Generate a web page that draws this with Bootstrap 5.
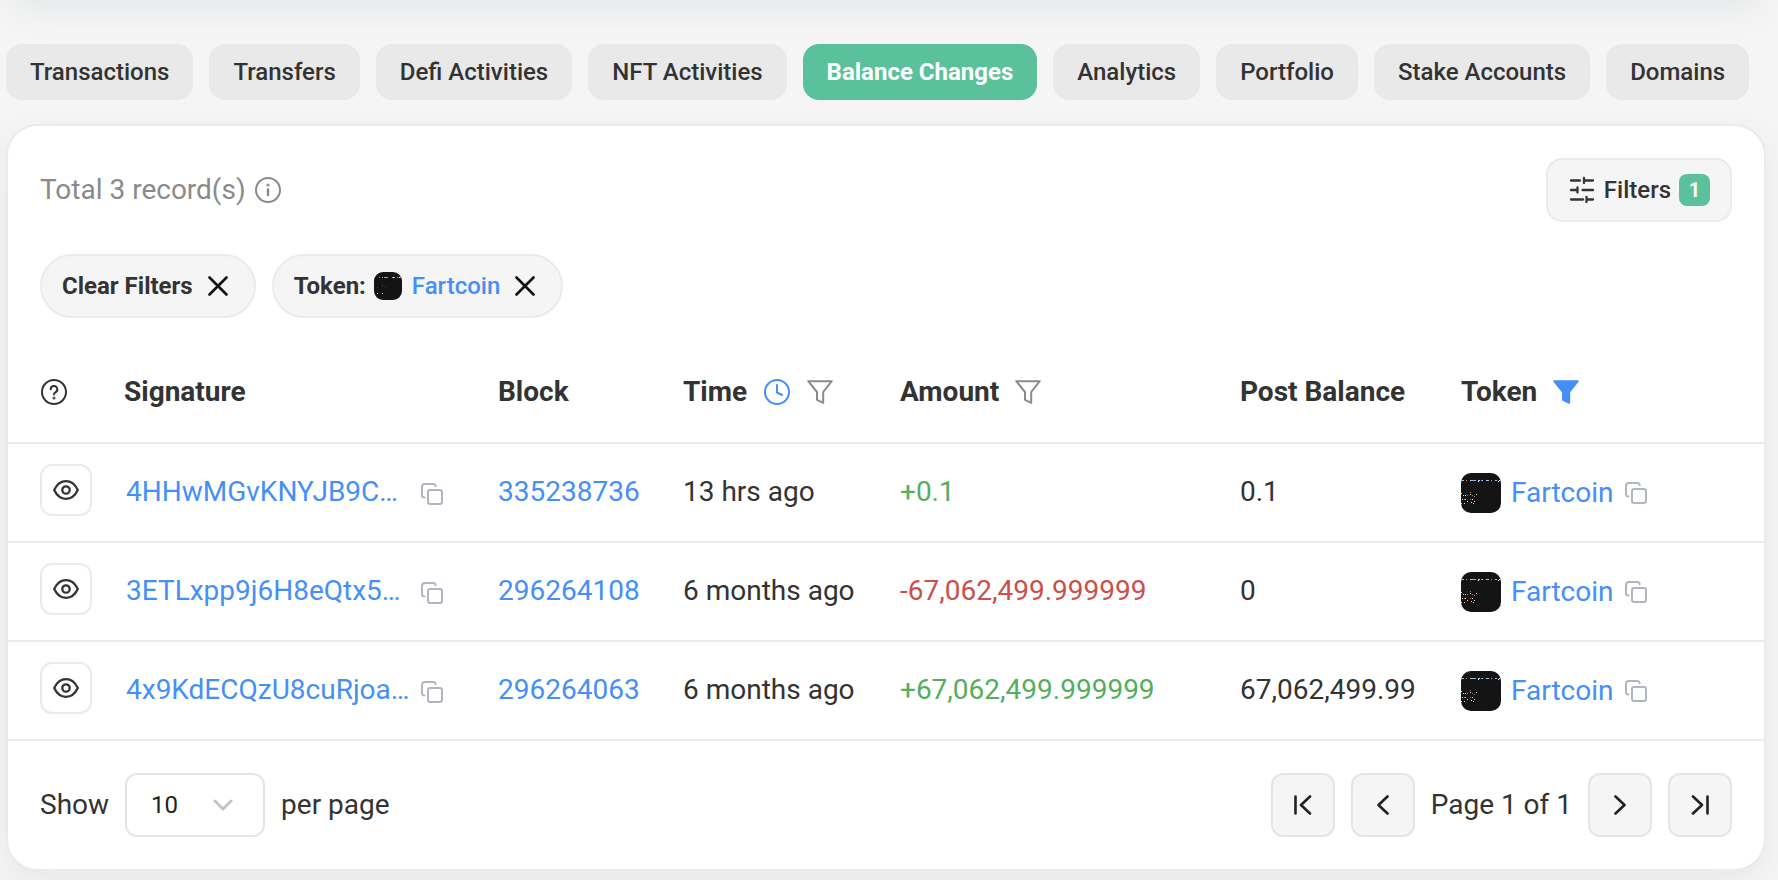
<!DOCTYPE html>
<html lang="en">
<head>
<meta charset="utf-8">
<meta name="viewport" content="width=device-width, initial-scale=1">
<title>Balance Changes</title>
<link rel="stylesheet" href="https://cdn.jsdelivr.net/npm/bootstrap@5.3.0/dist/css/bootstrap.min.css">
<style>
  :root { --line: #eaeaef; --ink: #333; --link: #458ff7; --brand: #5ac19c; --soft: #f5f5f5; }
  body { font-family: Roboto, "Liberation Sans", sans-serif; font-size: 28px; line-height: 40px; color: var(--ink); background: #f5f5f5; overflow-x: hidden; }
  a { color: var(--link); text-decoration: none; }
  svg { display: block; flex: none; }
  .ic { fill: none; stroke: currentColor; stroke-width: 2; stroke-linecap: round; stroke-linejoin: round; }
  .page-wrap { padding: 0 12px 9px 6px; }
  .panel { background: #fff; border: 2px solid var(--line); border-radius: 32px; box-shadow: 0 12px 32px rgba(140,152,164,.13); }
  .panel-above { height: 60px; margin-top: -60px; }
  .tab-row { padding-top: 44px; margin-bottom: 24px; }
  .tab-btn { border: 0; border-radius: 16px; background: #e9e9e9; color: var(--ink); font-size: 24px; font-weight: 500; line-height: 32px; padding: 12px 24px; white-space: nowrap; }
  .tab-btn.active { background: var(--brand); color: #fff; font-weight: 700; }
  .panel-top { padding: 32px 32px 0; }
  .btn-filters { height: 64px; border: 2px solid var(--line); border-radius: 16px; background: var(--soft); color: var(--ink); font-size: 24px; font-weight: 500; padding: 0 20px; }
  .count { background: var(--brand); color: #fff; border-radius: 8px; width: 31px; height: 32px; font-size: 20px; line-height: 32px; font-weight: 700; }
  .chip { height: 64px; border: 2px solid var(--line); border-radius: 32px; background: var(--soft); color: var(--ink); font-size: 24px; font-weight: 700; padding: 0 26px 0 20px; }
  .chip a { font-weight: 500; }
  .chip-x { margin-left: 15px; }
  .coin-name { margin-left: 10px; }
  .plain { border: 0; background: none; padding: 0; color: inherit; }
  .muted { color: #8a8a8a; }
  .tint { color: var(--link); }
  .grid-table { table-layout: fixed; width: 100%; margin-top: 26px; }
  .grid-table th, .grid-table td { padding: 0 0 0 16px; border-bottom: 2px solid var(--line); white-space: nowrap; vertical-align: middle; }
  .grid-table th:first-child, .grid-table td:first-child { padding-left: 32px; }
  .grid-table th { height: 99px; padding-bottom: 3px; font-weight: 700; }
  .grid-table td { height: 99px; padding-bottom: 2px; }
  .grid-table td:last-child { padding-bottom: 0; }
  .eye-btn { width: 52px; height: 52px; border: 2px solid var(--line); border-radius: 12px; background: #fff; color: var(--ink); margin-bottom: 4px; }
  .sig-link { width: 285px; padding-left: 2px; }
  .copy-btn { color: #b0b5bf; }
  .up { color: #54ae5c; }
  .down { color: #cb4f4a; }
  .panel-foot { padding: 32px; }
  .size-select { width: 140px; height: 64px; border: 2px solid #e5e5e5; border-radius: 12px; font-size: 24px; line-height: 32px; color: #222; padding: 0 24px; background-image: url("data:image/svg+xml,%3Csvg xmlns='http://www.w3.org/2000/svg' viewBox='0 0 20 12' fill='none' stroke='%23c4c4c4' stroke-width='3' stroke-linecap='round' stroke-linejoin='round'%3E%3Cpath d='M2 2l8 8 8-8'/%3E%3C/svg%3E"); background-size: 20px 12px; background-position: right 30px center; }
  .pg-btn { width: 64px; height: 64px; border: 2px solid #e5e5e5; border-radius: 12px; background: var(--soft); color: #222; }
</style>
</head>
<body>
<svg width="0" height="0" class="position-absolute" aria-hidden="true">
  <defs>
    <symbol id="i-x" viewBox="0 0 20 20"><path d="M1.500 1.500l17 17M18.500 1.500l-17 17" fill="none" stroke="#111" stroke-width="2.600" stroke-linecap="round"/></symbol>
    <symbol id="i-eye" viewBox="0 0 26 20"><path d="M1.200 10C4 4.200 8.200 1.200 13 1.200S22 4.200 24.800 10C22 15.800 17.800 18.800 13 18.800S4 15.800 1.200 10z" stroke-width="2.300"/><circle cx="13" cy="10" r="3.700" stroke-width="2.300"/></symbol>
    <symbol id="i-copy" viewBox="0 0 22 22"><rect x="7" y="7" width="14" height="14" rx="2.200"/><path d="M3.500 14.500C1.800 14.500 1 13.500 1 12V4c0-2 1-3 3-3h8c1.500 0 2.500.8 2.700 2.200"/></symbol>
    <symbol id="i-funnel" viewBox="0 0 26 24"><path d="M1.200 1.200h23.600L16.200 12v10.800L10 19.800V12z"/></symbol>
    <symbol id="i-coin" viewBox="0 0 40 40"><rect width="40" height="40" rx="10" fill="#141414"/><path d="M1 7.500h2M9 7.500h3m1 0h2m2 0h2m2 0h1m3 0h3m6 0h2" stroke="#9cc4ef"/><path d="M5 7.500h1m6 0h1m7 0h1m9 0h1" stroke="#d98b53"/><path d="M37 8.500h1M17 8.500h1M38 7.500h1" stroke="#fff"/><path d="M0 20.500h1m1 2h1m1 0h1m4-1h1m1 1h1m3-1h1M1 26.500h1m2 0h1m1 2h1m4-2h1m1 2h1M0 30.500h1m2 0h1m6-1h1m1 1h1" stroke="#ddd"/><path d="M9 19.500h1m1 3h1m-3 4h1m3-3h1m-8-1h1m-4 4h1" stroke="#bd7041"/></symbol>
    <symbol id="i-coin-sm" viewBox="0 0 28 28"><rect width="28" height="28" rx="9" fill="#141414"/><path d="M5 5.500h1m2 0h1m1 0h4m4 0h1m1 0h1m2 0h1m2 0h1" stroke="#c99a52"/><path d="M19 5.500h1m5 0h1M3 21.500h1m4 0h1" stroke="#eee"/><path d="M3 15.500h1m4-1h1m2 1h1m-4-2h1" stroke="#5b2418"/></symbol>
  </defs>
</svg>

<main class="page-wrap">
  <div class="panel panel-above"></div>

  <nav class="tab-row d-flex gap-3" aria-label="Account sections">
    <button type="button" class="tab-btn">Transactions</button>
    <button type="button" class="tab-btn">Transfers</button>
    <button type="button" class="tab-btn">Defi Activities</button>
    <button type="button" class="tab-btn">NFT Activities</button>
    <button type="button" class="tab-btn active" aria-current="page">Balance Changes</button>
    <button type="button" class="tab-btn">Analytics</button>
    <button type="button" class="tab-btn">Portfolio</button>
    <button type="button" class="tab-btn">Stake Accounts</button>
    <button type="button" class="tab-btn">Domains</button>
  </nav>

  <section class="panel">
    <div class="panel-top">
      <div class="d-flex justify-content-between align-items-center">
        <div class="muted d-flex align-items-center">
          <span>Total 3 record(s)</span>
          <svg class="ic ms-2" width="28" height="28" viewBox="0 0 28 28"><circle cx="14" cy="14" r="12"/><path d="M14 13.500v5.500" stroke-width="2.500"/><circle cx="14" cy="9" r=".6"/></svg>
        </div>
        <button type="button" class="btn-filters d-flex align-items-center gap-2">
          <svg class="ic" width="28" height="28" viewBox="0 0 28 28" stroke-width="2.300"><path d="M3 4.500h9M16 2v5M16 4.500h9M3 14h6.500M9.500 11.500v5M14.500 14H25M3 23.500h12M18.500 21v5M18.500 23.500H25" stroke-width="2.300"/></svg>
          <span>Filters</span>
          <span class="count">1</span>
        </button>
      </div>
      <div class="d-flex gap-3 mt-3 pt-3">
        <button type="button" class="chip d-flex align-items-center">Clear Filters<svg class="chip-x" width="20" height="20"><use href="#i-x"/></svg></button>
        <div class="chip d-flex align-items-center">
          <span>Token:</span>
          <svg class="ms-2" width="28" height="28"><use href="#i-coin-sm"/></svg>
          <a href="#" class="coin-name">Fartcoin</a>
          <button type="button" class="plain chip-x" aria-label="Remove token filter"><svg width="20" height="20"><use href="#i-x"/></svg></button>
        </div>
      </div>
    </div>

    <table class="grid-table">
      <colgroup>
        <col style="width:100px"><col style="width:374px"><col style="width:185px"><col style="width:217px"><col style="width:340px"><col style="width:221px"><col style="width:319px">
      </colgroup>
      <thead>
        <tr>
          <th scope="col" aria-label="Preview"><svg class="ic" width="28" height="28" viewBox="0 0 28 28"><circle cx="14" cy="14" r="12"/><path d="M10.700 11.300a3.300 3.300 0 1 1 4.900 2.900c-1.200.7-1.600 1.200-1.600 2.300"/><circle cx="14" cy="20" r=".5"/></svg></th>
          <th scope="col">Signature</th>
          <th scope="col">Block</th>
          <th scope="col">
            <div class="d-flex align-items-center gap-3">Time
              <button type="button" class="plain tint" aria-label="Toggle time format"><svg class="ic" width="28" height="28" viewBox="0 0 28 28"><circle cx="14" cy="14" r="12"/><path d="M14 7v7.500l5 2.500"/></svg></button>
              <button type="button" class="plain muted" aria-label="Filter by time"><svg class="ic" width="26" height="24"><use href="#i-funnel"/></svg></button>
            </div>
          </th>
          <th scope="col"><div class="d-flex align-items-center gap-3">Amount<button type="button" class="plain muted" aria-label="Filter by amount"><svg class="ic" width="26" height="24"><use href="#i-funnel"/></svg></button></div></th>
          <th scope="col">Post Balance</th>
          <th scope="col"><div class="d-flex align-items-center gap-3">Token<button type="button" class="plain tint" aria-label="Filter by token"><svg class="ic" style="fill:currentColor" width="26" height="24"><use href="#i-funnel"/></svg></button></div></th>
        </tr>
      </thead>
      <tbody>
        <tr>
          <td><button type="button" class="eye-btn d-flex align-items-center justify-content-center p-0" aria-label="Preview"><svg class="ic" width="26" height="20"><use href="#i-eye"/></svg></button></td>
          <td><div class="d-flex align-items-center"><a href="#" class="sig-link">4HHwMGvKNYJB9C…</a><button type="button" class="plain copy-btn ms-2 ps-1 pt-1" aria-label="Copy signature"><svg class="ic" width="22" height="22"><use href="#i-copy"/></svg></button></div></td>
          <td><a href="#">335238736</a></td>
          <td>13 hrs ago</td>
          <td class="up">+0.1</td>
          <td>0.1</td>
          <td><div class="d-flex align-items-center"><svg width="40" height="40"><use href="#i-coin"/></svg><a href="#" class="coin-name">Fartcoin</a><button type="button" class="plain copy-btn ms-2 ps-1" aria-label="Copy token"><svg class="ic" width="22" height="22"><use href="#i-copy"/></svg></button></div></td>
        </tr>
        <tr>
          <td><button type="button" class="eye-btn d-flex align-items-center justify-content-center p-0" aria-label="Preview"><svg class="ic" width="26" height="20"><use href="#i-eye"/></svg></button></td>
          <td><div class="d-flex align-items-center"><a href="#" class="sig-link">3ETLxpp9j6H8eQtx5…</a><button type="button" class="plain copy-btn ms-2 ps-1 pt-1" aria-label="Copy signature"><svg class="ic" width="22" height="22"><use href="#i-copy"/></svg></button></div></td>
          <td><a href="#">296264108</a></td>
          <td>6 months ago</td>
          <td class="down">-67,062,499.999999</td>
          <td>0</td>
          <td><div class="d-flex align-items-center"><svg width="40" height="40"><use href="#i-coin"/></svg><a href="#" class="coin-name">Fartcoin</a><button type="button" class="plain copy-btn ms-2 ps-1" aria-label="Copy token"><svg class="ic" width="22" height="22"><use href="#i-copy"/></svg></button></div></td>
        </tr>
        <tr>
          <td><button type="button" class="eye-btn d-flex align-items-center justify-content-center p-0" aria-label="Preview"><svg class="ic" width="26" height="20"><use href="#i-eye"/></svg></button></td>
          <td><div class="d-flex align-items-center"><a href="#" class="sig-link">4x9KdECQzU8cuRjoa…</a><button type="button" class="plain copy-btn ms-2 ps-1 pt-1" aria-label="Copy signature"><svg class="ic" width="22" height="22"><use href="#i-copy"/></svg></button></div></td>
          <td><a href="#">296264063</a></td>
          <td>6 months ago</td>
          <td class="up">+67,062,499.999999</td>
          <td>67,062,499.99</td>
          <td><div class="d-flex align-items-center"><svg width="40" height="40"><use href="#i-coin"/></svg><a href="#" class="coin-name">Fartcoin</a><button type="button" class="plain copy-btn ms-2 ps-1" aria-label="Copy token"><svg class="ic" width="22" height="22"><use href="#i-copy"/></svg></button></div></td>
        </tr>
      </tbody>
    </table>

    <div class="panel-foot d-flex justify-content-between align-items-center">
      <div class="d-flex align-items-center gap-3">
        <label for="pageSize">Show</label>
        <select id="pageSize" class="form-select size-select"><option>10</option><option>20</option><option>50</option></select>
        <span>per page</span>
      </div>
      <div class="d-flex align-items-center gap-3">
        <button type="button" class="pg-btn d-flex align-items-center justify-content-center p-0" aria-label="First page"><svg class="ic" width="20" height="20" viewBox="0 0 20 20"><path d="M2.500 1.500v17M17 1.500L8 10l9 8.500" stroke-width="2.600"/></svg></button>
        <button type="button" class="pg-btn d-flex align-items-center justify-content-center p-0" aria-label="Previous page"><svg class="ic" width="20" height="20" viewBox="0 0 20 20"><path d="M14.500 1.500L5.500 10l9 8.500" stroke-width="2.600"/></svg></button>
        <span>Page 1 of 1</span>
        <button type="button" class="pg-btn d-flex align-items-center justify-content-center p-0" aria-label="Next page"><svg class="ic" width="20" height="20" viewBox="0 0 20 20"><path d="M5.500 1.500l9 8.500-9 8.500" stroke-width="2.600"/></svg></button>
        <button type="button" class="pg-btn d-flex align-items-center justify-content-center p-0" aria-label="Last page"><svg class="ic" width="20" height="20" viewBox="0 0 20 20"><path d="M17.500 1.500v17M3 1.500l9 8.500-9 8.500" stroke-width="2.600"/></svg></button>
      </div>
    </div>
  </section>
</main>
<script src="https://cdn.jsdelivr.net/npm/bootstrap@5.3.0/dist/js/bootstrap.bundle.min.js"></script>
</body>
</html>
